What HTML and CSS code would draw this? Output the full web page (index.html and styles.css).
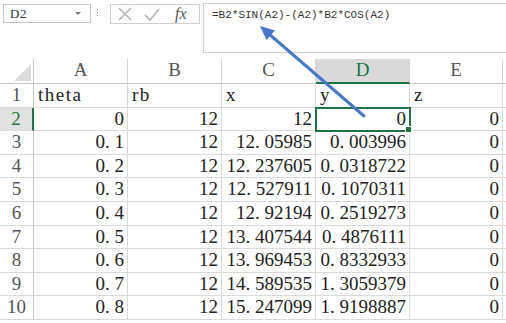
FILE: index.html
```html
<!DOCTYPE html>
<html lang="en">
<head>
    <meta charset="UTF-8">
    <meta name="viewport" content="width=device-width, initial-scale=1.0">
    <title>Sheet1</title>
    <link rel="stylesheet" href="styles.css">
</head>
<body>
    <div class="formula-bar">
        <div class="name-box">
            <span>D2</span>
            <span class="caret"></span>
        </div>
        <div class="grip"><i></i><i></i><i></i></div>
        <div class="fx-tools">
            <svg class="tool" width="16" height="16" viewBox="0 0 16 16">
                <path d="M2 2 L14 14 M14 2 L2 14" stroke="#b4b4b4" stroke-width="1.6" fill="none"/>
            </svg>
            <svg class="tool" width="18" height="16" viewBox="0 0 18 16">
                <path d="M2 9 L7 14 L16 3" stroke="#b4b4b4" stroke-width="1.6" fill="none"/>
            </svg>
            <span class="fx">fx</span>
        </div>
        <div class="formula">=B2*SIN(A2)-(A2)*B2*COS(A2)</div>
    </div>

    <div class="sheet">
        <div class="corner"><span class="tri"></span></div>
        <div class="ch">A</div>
        <div class="ch">B</div>
        <div class="ch">C</div>
        <div class="ch active">D</div>
        <div class="ch">E</div>
        <div class="ch fill"></div>

        <div class="rh">1</div>
        <div class="c txt">theta</div>
        <div class="c txt">rb</div>
        <div class="c txt">x</div>
        <div class="c txt">y</div>
        <div class="c txt">z</div>
        <div class="c fill"></div>

        <div class="rh active">2</div>
        <div class="c">0</div>
        <div class="c">12</div>
        <div class="c">12</div>
        <div class="c selected">0</div>
        <div class="c">0</div>
        <div class="c fill"></div>

        <div class="rh">3</div>
        <div class="c">0<span class="dot">.</span>1</div>
        <div class="c">12</div>
        <div class="c">12<span class="dot">.</span>05985</div>
        <div class="c">0<span class="dot">.</span>003996</div>
        <div class="c">0</div>
        <div class="c fill"></div>

        <div class="rh">4</div>
        <div class="c">0<span class="dot">.</span>2</div>
        <div class="c">12</div>
        <div class="c">12<span class="dot">.</span>237605</div>
        <div class="c">0<span class="dot">.</span>0318722</div>
        <div class="c">0</div>
        <div class="c fill"></div>

        <div class="rh">5</div>
        <div class="c">0<span class="dot">.</span>3</div>
        <div class="c">12</div>
        <div class="c">12<span class="dot">.</span>527911</div>
        <div class="c">0<span class="dot">.</span>1070311</div>
        <div class="c">0</div>
        <div class="c fill"></div>

        <div class="rh">6</div>
        <div class="c">0<span class="dot">.</span>4</div>
        <div class="c">12</div>
        <div class="c">12<span class="dot">.</span>92194</div>
        <div class="c">0<span class="dot">.</span>2519273</div>
        <div class="c">0</div>
        <div class="c fill"></div>

        <div class="rh">7</div>
        <div class="c">0<span class="dot">.</span>5</div>
        <div class="c">12</div>
        <div class="c">13<span class="dot">.</span>407544</div>
        <div class="c">0<span class="dot">.</span>4876111</div>
        <div class="c">0</div>
        <div class="c fill"></div>

        <div class="rh">8</div>
        <div class="c">0<span class="dot">.</span>6</div>
        <div class="c">12</div>
        <div class="c">13<span class="dot">.</span>969453</div>
        <div class="c">0<span class="dot">.</span>8332933</div>
        <div class="c">0</div>
        <div class="c fill"></div>

        <div class="rh">9</div>
        <div class="c">0<span class="dot">.</span>7</div>
        <div class="c">12</div>
        <div class="c">14<span class="dot">.</span>589535</div>
        <div class="c">1<span class="dot">.</span>3059379</div>
        <div class="c">0</div>
        <div class="c fill"></div>

        <div class="rh">10</div>
        <div class="c">0<span class="dot">.</span>8</div>
        <div class="c">12</div>
        <div class="c">15<span class="dot">.</span>247099</div>
        <div class="c">1<span class="dot">.</span>9198887</div>
        <div class="c">0</div>
        <div class="c fill"></div>
    </div>

    <!-- callout arrow pointing at the formula -->
    <svg class="arrow" width="506" height="323" viewBox="0 0 506 323">
        <line x1="364" y1="116" x2="269" y2="34" stroke="#4a78c8" stroke-width="3" stroke-linecap="round"/>
        <polygon points="260,26 266.5,40 275,30.5" fill="#4a78c8"/>
    </svg>
</body>
</html>
```

FILE: styles.css
```css
body {
    margin: 0;
    background-color: #ffffff;
    font-family: "Liberation Serif", "Times New Roman", serif;
    color: #222;
    position: relative;
    width: 506px;
    height: 323px;
    overflow: hidden;
}
.formula-bar {
    display: flex;
    align-items: flex-start;
    height: 53px;
}
.name-box {
    margin: 4px 0 0 3px;
    width: 88px;
    height: 19px;
    border: 1px solid #c6c6c6;
    display: flex;
    align-items: center;
    justify-content: space-between;
    padding: 0 9px 0 6px;
    box-sizing: border-box;
    font-family: "Liberation Serif", serif;
    font-size: 13px;
    letter-spacing: 0.5px;
    color: #333;
}
.caret {
    width: 0;
    height: 0;
    border-left: 3px solid transparent;
    border-right: 3px solid transparent;
    border-top: 3px solid #777;
}
.grip {
    display: flex;
    flex-direction: column;
    gap: 2px;
    margin: 9px 0 0 6px;
}
.grip i {
    display: block;
    width: 1px;
    height: 1px;
    background-color: #9a9a9a;
}
.fx-tools {
    margin: 4px 0 0 12px;
    width: 90px;
    height: 20px;
    border: 1px solid #d0d0d0;
    box-sizing: border-box;
    display: flex;
    align-items: center;
    padding-left: 6px;
    gap: 10px;
}
.fx {
    font-family: "Liberation Serif", serif;
    font-style: italic;
    font-size: 16px;
    color: #555;
    margin-left: 4px;
}
.formula {
    flex: 1;
    margin: 3px 0 0 3px;
    height: 50px;
    border: 1px solid #cfcfcf;
    border-right: none;
    box-sizing: border-box;
    padding: 5px 0 0 8px;
    font-family: "Liberation Mono", monospace;
    font-size: 11px;
    color: #333;
}
.sheet {
    margin-top: 6px;
    display: grid;
    grid-template-columns: 34px 94px 94px 94px 94px 93px 1fr;
    grid-template-rows: 25px repeat(10, 23.6px);
    font-family: "Liberation Serif", serif;
    font-size: 19px;
}
.sheet > div {
    box-sizing: border-box;
    line-height: 22px;
    white-space: nowrap;
}
.corner {
    border-right: 1px solid #c8c8c8;
    border-bottom: 1px solid #c8c8c8;
    position: relative;
}
.tri {
    position: absolute;
    right: 2px;
    bottom: 2px;
    width: 0;
    height: 0;
    border-left: 17px solid transparent;
    border-bottom: 17px solid #dcdcdc;
}
.ch {
    text-align: center;
    color: #555;
    border-right: 1px solid #d4d4d4;
    border-bottom: 1px solid #c8c8c8;
}
.ch.active {
    background-color: #d9d9d9;
    color: #217346;
    border-bottom: 2px solid #217346;
}
.ch.fill {
    border-right: none;
}
.rh {
    text-align: center;
    color: #555;
    border-right: 1px solid #c8c8c8;
    border-bottom: 1px solid #dadada;
}
.rh.active {
    background-color: #e1e1e1;
    color: #217346;
    border-right: 2px solid #217346;
}
.c {
    text-align: right;
    padding-right: 3px;
    border-right: 1px solid #dadada;
    border-bottom: 1px solid #dadada;
}
.c.txt {
    text-align: left;
    padding-left: 4px;
    letter-spacing: 1.5px;
}
.c.fill {
    border-right: none;
}
.dot {
    letter-spacing: 4.7px;
}
.selected {
    position: relative;
    outline: 2px solid #217346;
    outline-offset: -1px;
}
.selected::after {
    content: "";
    position: absolute;
    right: -3px;
    bottom: -3px;
    width: 5px;
    height: 5px;
    background-color: #217346;
    border: 1px solid #ffffff;
}
.arrow {
    position: absolute;
    left: 0;
    top: 0;
    pointer-events: none;
}
```
